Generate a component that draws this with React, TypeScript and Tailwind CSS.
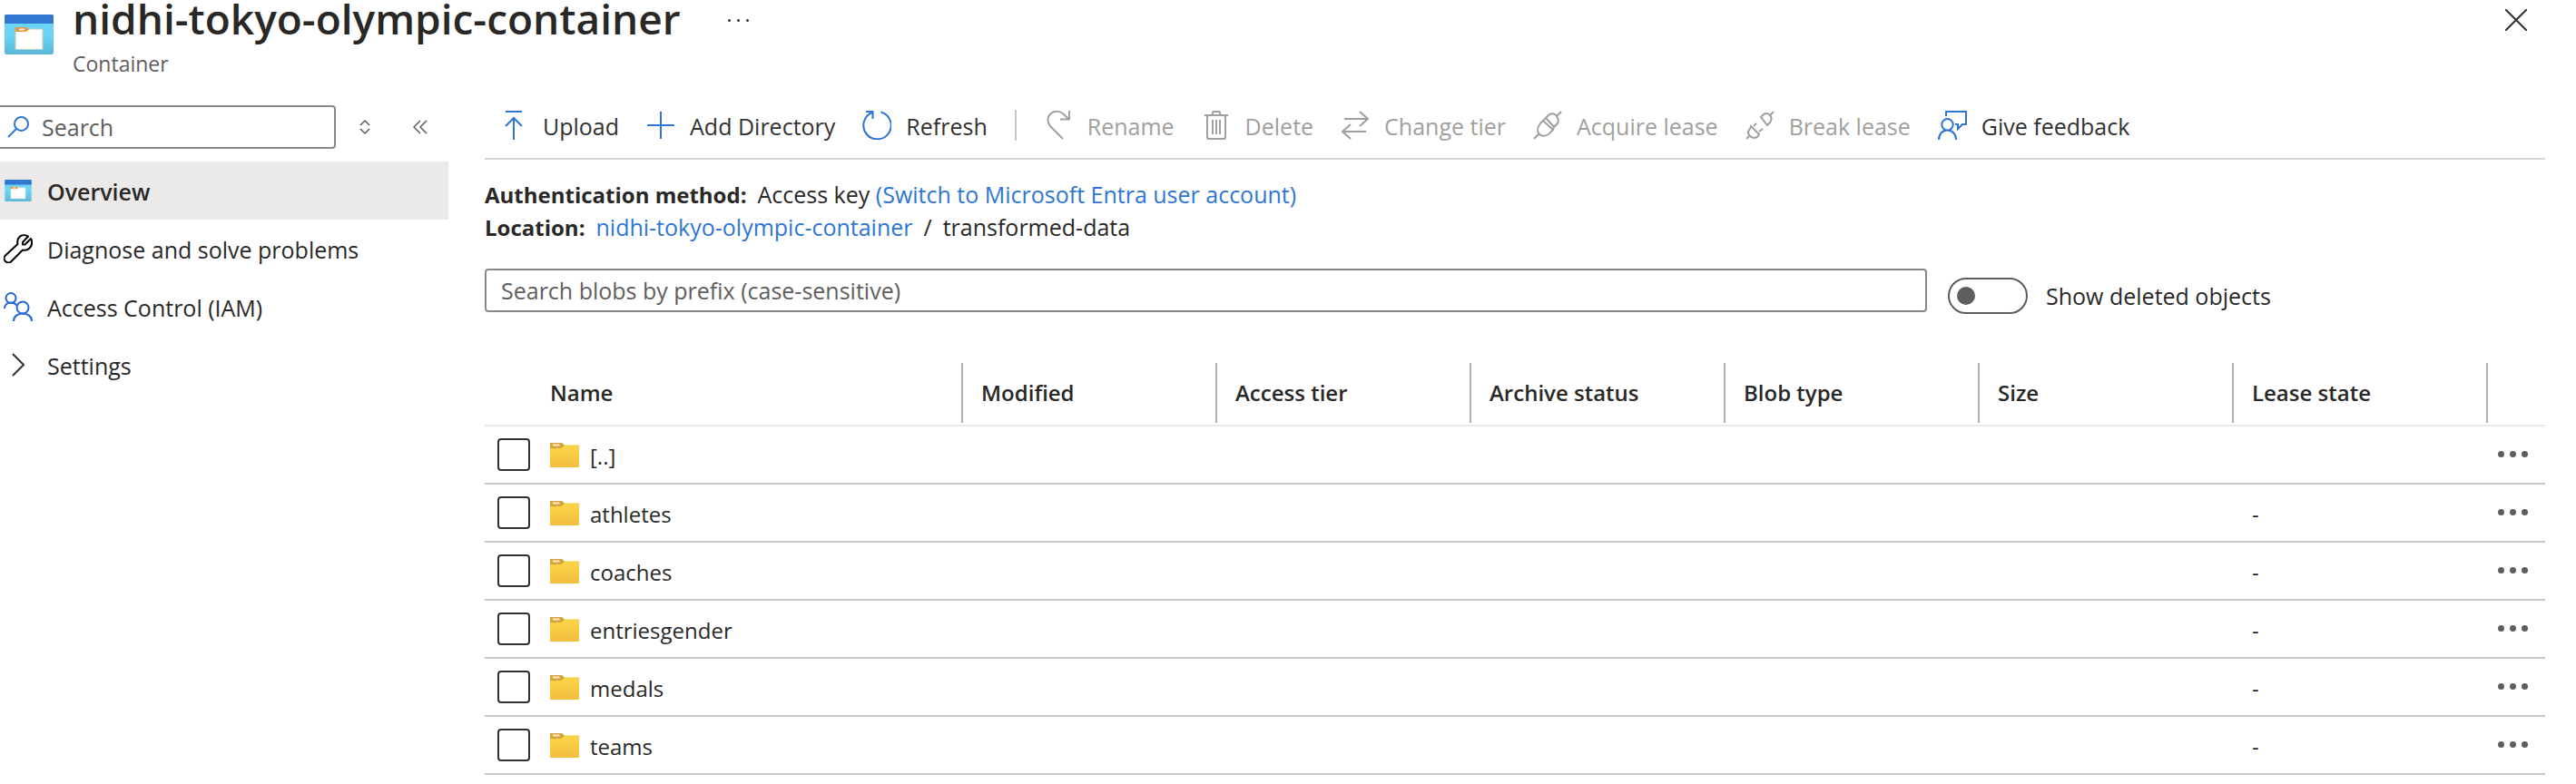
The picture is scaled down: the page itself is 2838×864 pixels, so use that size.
import React from 'react';

type IconProps = { className?: string };

const ContainerIcon = ({ className }: IconProps) => (
  <svg className={className} viewBox="0 0 54 44" aria-hidden="true">
    <defs>
      <linearGradient id="containerBody" x1="0" y1="0" x2="0" y2="1">
        <stop offset="0" stopColor="#6ad5f5" />
        <stop offset="0.5" stopColor="#6ad5f5" />
        <stop offset="1" stopColor="#5db8d8" />
      </linearGradient>
    </defs>
    <rect x="0" y="0" width="54" height="44" rx="2" fill="url(#containerBody)" />
    <path d="M0 10V2a2 2 0 0 1 2-2h50a2 2 0 0 1 2 2v8z" fill="#3277d2" />
    <path d="M12 17h13l2-1h15v22.500H12z" fill="#fff" stroke="#b9cdc8" strokeWidth="1" />
    <path d="M12 14h11q1 0 2 1l2 1.500-2 1.500q-1 1-2 1H12z" fill="#ee9338" />
    <rect x="16" y="15.500" width="6" height="2" rx="1" fill="#fff" />
  </svg>
);

const FolderIcon = ({ className }: IconProps) => (
  <svg className={className} viewBox="0 0 32 27" aria-hidden="true">
    <defs>
      <linearGradient id="folderBody" x1="0" y1="0" x2="0" y2="1">
        <stop offset="0" stopColor="#f9d648" />
        <stop offset="1" stopColor="#f5bd41" />
      </linearGradient>
    </defs>
    <path d="M14 2h18v2H14z" fill="#f3dfa6" />
    <path d="M0 0h13.500l2.500 3-3 3H0z" fill="#d9a53a" />
    <path d="M0 6h12q1 0 2-1l2-2h16v24H0z" fill="url(#folderBody)" />
    <rect x="3" y="1.500" width="7.500" height="2" fill="#fdf3d6" />
  </svg>
);

const Line = ({ className, children }: IconProps & { children: React.ReactNode }) => (
  <svg className={className} viewBox="0 0 32 32" fill="none" stroke="currentColor" strokeWidth={2} aria-hidden="true">
    {children}
  </svg>
);

const icons = {
  upload: <path d="M7 1h18M16 32V7M7 17l9-9 9 9" />,
  plus: <path d="M16 1v30M1 16h30" />,
  refresh: <path d="M20.500 1.500A15.200 15.200 0 1 1 11 2M4 1h7.500v8" />,
  rename: <path d="M21 31L7 17C3 12 4 6 8 3c5-4 11-2 14 1l5 5M28 0v9.500H18" />,
  trash: <path d="M3 5h26M12 5V2q0-1 1-1h6q1 0 1 1v3M6 5v25q0 1 1 1h18q1 0 1-1V5M12 10v16M16 10v16M20 10v16" />,
  swap: <path d="M4 9h26M21 1l9 8-9 8M28 23H2M11 15l-9 8 9 8" />,
  acquire: (
    <path d="M31 1l-5 5M1 31l5-5M14 8l3-3c3-3 7-2 9 1s3 6 0 9l-3 3zM11 11L22 21l-3 3c-3 4-9 5-12 2s-2-8 1-12zM11 11l3-3M23 18l-1 3" />
  ),
  unplug: (
    <path d="M31 1l-4 4M1 31l4-4M17 7l2-2c3-3 6-2 8 0s2 5 0 8l-3 3zM6 17l9 9-1 2c-3 3-7 2-9 0s-3-5 0-8zM9 17l3-3M15 23l4-3" />
  ),
  feedback: <path d="M9 6V1h22v14h-4l-5 5v-5h-3M1 32c0-6 4-10.500 9.500-10.500S20 26 20 32M10.500 21.500a6.200 6.200 0 1 0 0-12.400 6.200 6.200 0 0 0 0 12.400z" />,
};

const actions: { label: string; icon: keyof typeof icons; disabled?: boolean; divider?: boolean }[] = [
  { label: 'Upload', icon: 'upload' },
  { label: 'Add Directory', icon: 'plus' },
  { label: 'Refresh', icon: 'refresh' },
  { label: 'Rename', icon: 'rename', disabled: true, divider: true },
  { label: 'Delete', icon: 'trash', disabled: true },
  { label: 'Change tier', icon: 'swap', disabled: true },
  { label: 'Acquire lease', icon: 'acquire', disabled: true },
  { label: 'Break lease', icon: 'unplug', disabled: true },
  { label: 'Give feedback', icon: 'feedback' },
];

const columns = ['Modified', 'Access tier', 'Archive status', 'Blob type', 'Size', 'Lease state'];

const rows = [
  { name: '[..]', lease: '' },
  { name: 'athletes', lease: '-' },
  { name: 'coaches', lease: '-' },
  { name: 'entriesgender', lease: '-' },
  { name: 'medals', lease: '-' },
  { name: 'teams', lease: '-' },
];

function Header() {
  return (
    <header className="flex h-[116px] items-start pr-[54px]">
      <ContainerIcon className="mt-4 ml-[5px] h-11 w-[54px]" />
      <div className="ml-[21px]">
        <div className="flex items-center">
          <h1 className="text-[46px] leading-10 font-semibold">nidhi-tokyo-olympic-container</h1>
          <button aria-label="More options" className="ml-[52px] flex gap-[7px] pt-1">
            <span className="size-[3px] rounded-full bg-[#323130]" />
            <span className="size-[3px] rounded-full bg-[#323130]" />
            <span className="size-[3px] rounded-full bg-[#323130]" />
          </button>
        </div>
        <p className="mt-3 text-[23px] leading-9 text-[#605e5c]">Container</p>
      </div>
      <button aria-label="Close" className="mt-[10px] ml-auto">
        <svg className="size-6" viewBox="0 0 24 24" stroke="#323130" strokeWidth="2" aria-hidden="true">
          <path d="M0 0l24 24M24 0L0 24" />
        </svg>
      </button>
    </header>
  );
}

function Sidebar() {
  return (
    <aside className="w-[494px] shrink-0">
      <div className="flex h-12 items-center">
        <label className="flex h-12 w-[370px] items-center gap-[14px] rounded-r border-2 border-l-0 border-[#8a8886] pl-2">
          <svg className="size-6 shrink-0 text-[#2f76d2]" viewBox="0 0 24 24" fill="none" stroke="currentColor" strokeWidth="2" aria-hidden="true">
            <circle cx="15.500" cy="8.500" r="7.500" />
            <path d="M10 14L1 23" />
          </svg>
          <input aria-label="Search" placeholder="Search" className="min-w-0 flex-1 outline-none placeholder:text-[#605e5c]" />
        </label>
        <button aria-label="Expand or collapse all" className="ml-[26px]">
          <svg className="h-4 w-3" viewBox="0 0 12 16" fill="none" stroke="#605e5c" strokeWidth="1.500" aria-hidden="true">
            <path d="M1 6l5-5 5 5M1 10l5 5 5-5" />
          </svg>
        </button>
        <button aria-label="Collapse menu" className="ml-[47px]">
          <svg className="size-4" viewBox="0 0 16 16" fill="none" stroke="#605e5c" strokeWidth="1.500" aria-hidden="true">
            <path d="M8 1L1 8l7 7M15 1L8 8l7 7" />
          </svg>
        </button>
      </div>
      <nav className="mt-[14px]">
        <a href="#overview" className="flex h-16 items-center gap-4 bg-[#ebeae9] pl-1 font-semibold">
          <span className="flex w-8 justify-center">
            <ContainerIcon className="h-6 w-[30px]" />
          </span>
          <span className="pt-[2px]">Overview</span>
        </a>
        <a href="#diagnose" className="flex h-16 items-center gap-4 pl-1">
          <Line className="size-8 text-black">
            <path strokeLinejoin="round" d="M27 2.500l-6 6.500v2.500h2.500L30 5c2 4 1 8-1.500 10.500S23 18 21 17.500L8.500 30a4.300 4.300 0 0 1-6.500-6.500L15.500 11c-1-4 0-6 2-8s6-2.500 9.500-.5z" />
          </Line>
          <span className="pt-[2px]">Diagnose and solve problems</span>
        </a>
        <a href="#iam" className="flex h-16 items-center gap-4 pl-1">
          <Line className="size-8 text-[#2563d9]">
            <circle cx="8" cy="6.500" r="5.500" />
            <circle cx="21" cy="17" r="6.500" />
            <path d="M1 18c0-4 3-6.500 7-6.500 3 0 5 1 6.500 3M11 32c0-5 4-8.500 10-8.500S31 27 31 32" />
          </Line>
          <span className="pt-[2px]">Access Control (IAM)</span>
        </a>
        <button className="flex h-16 w-full items-center gap-4 pl-1">
          <Line className="size-8 text-[#323130]">
            <path d="M10 4l12 12-12 12" />
          </Line>
          <span className="pt-[2px]">Settings</span>
        </button>
      </nav>
    </aside>
  );
}

function Toolbar() {
  return (
    <div className="flex h-15 items-start gap-[30px] border-b-2 border-[#d6d6d6] pl-4">
      {actions.map((a) => (
        <React.Fragment key={a.label}>
          {a.divider && <span className="mt-[5px] h-[34px] w-[2px] bg-[#c8c6c4]" />}
          <button
            disabled={a.disabled}
            className="flex h-11 items-center gap-4 whitespace-nowrap text-[#323130] disabled:text-[#a19f9d]"
          >
            <Line className={a.disabled ? 'size-8' : 'size-8 text-[#2f76d2]'}>{icons[a.icon]}</Line>
            <span className="pt-[2px]">{a.label}</span>
          </button>
        </React.Fragment>
      ))}
    </div>
  );
}

function BlobTable() {
  return (
    <table className="mt-[53px] w-full table-fixed border-collapse text-left text-[24px]">
      <colgroup>
        <col className="w-[72px]" />
        <col />
        {columns.map((c) => (
          <col key={c} className="w-[280px]" />
        ))}
        <col className="w-[65px]" />
      </colgroup>
      <thead>
        <tr className="h-[70px] border-b-2 border-[#eaeaea]">
          <th aria-label="Select" className="p-0" />
          <th className="p-0 pt-px pb-[2px] font-semibold">
            <div className="flex h-[66px] items-center">Name</div>
          </th>
          {columns.map((c) => (
            <th key={c} className="p-0 pt-px pb-[2px] font-semibold">
              <div className="flex h-[66px] items-center border-l-2 border-[#b3b0ad] pl-5">{c}</div>
            </th>
          ))}
          <th aria-label="Actions" className="p-0 pt-px pb-[2px]">
            <div className="h-[66px] border-l-2 border-[#b3b0ad]" />
          </th>
        </tr>
      </thead>
      <tbody>
        {rows.map((r) => (
          <tr key={r.name} className="h-16 border-b-2 border-[#c8c8c8]">
            <td className="p-0 pl-[14px]">
              <input
                type="checkbox"
                aria-label={`Select ${r.name}`}
                className="block size-9 appearance-none rounded border-2 border-[#323130] checked:bg-[#2f76d2]"
              />
            </td>
            <td className="p-0">
              <a href="#folder" className="flex items-center gap-3">
                <FolderIcon className="h-[27px] w-8" />
                <span className="pt-1">{r.name}</span>
              </a>
            </td>
            {columns.map((c) => (
              <td key={c} className="p-0 pt-1 pl-[22px]">
                {c === 'Lease state' ? r.lease : ''}
              </td>
            ))}
            <td className="p-0 pb-[2px]">
              <button aria-label={`Actions for ${r.name}`} className="ml-[13px] flex gap-[6px]">
                <span className="size-[7px] rounded-full bg-[#605e5c]" />
                <span className="size-[7px] rounded-full bg-[#605e5c]" />
                <span className="size-[7px] rounded-full bg-[#605e5c]" />
              </button>
            </td>
          </tr>
        ))}
      </tbody>
    </table>
  );
}

export default function App() {
  return (
    <div className="min-h-screen bg-white font-['Open_Sans','Noto_Sans',sans-serif] text-[25px] leading-9 text-[#292827]">
      <Header />
      <div className="flex">
        <Sidebar />
        <main className="ml-10 min-w-0 flex-1 pr-[34px]">
          <Toolbar />
          <div className="mt-5">
            <p className="h-9">
              <span className="mr-3 text-[24px] font-bold">Authentication method:</span>
              Access key{' '}
              <a href="#switch" className="text-[#2f76d2]">(Switch to Microsoft Entra user account)</a>
            </p>
            <p className="h-9">
              <span className="mr-3 text-[24px] font-bold">Location:</span>
              <a href="#container" className="text-[#2f76d2]">nidhi-tokyo-olympic-container</a>
              <span className="mx-3">/</span>
              transformed-data
            </p>
          </div>
          <div className="mt-7 flex items-start">
            <input
              aria-label="Search blobs by prefix"
              placeholder="Search blobs by prefix (case-sensitive)"
              className="h-12 flex-1 rounded border-2 border-[#8a8886] px-4 outline-none placeholder:text-[#605e5c]"
            />
            <label className="mt-[10px] ml-[23px] flex h-10 w-[658px] items-center gap-5">
              <input type="checkbox" role="switch" className="peer sr-only" />
              <span className="flex h-10 w-[88px] items-center rounded-full border-2 border-[#605e5c] px-2 peer-checked:justify-end">
                <span className="size-5 rounded-full bg-[#605e5c]" />
              </span>
              Show deleted objects
            </label>
          </div>
          <BlobTable />
        </main>
      </div>
    </div>
  );
}
